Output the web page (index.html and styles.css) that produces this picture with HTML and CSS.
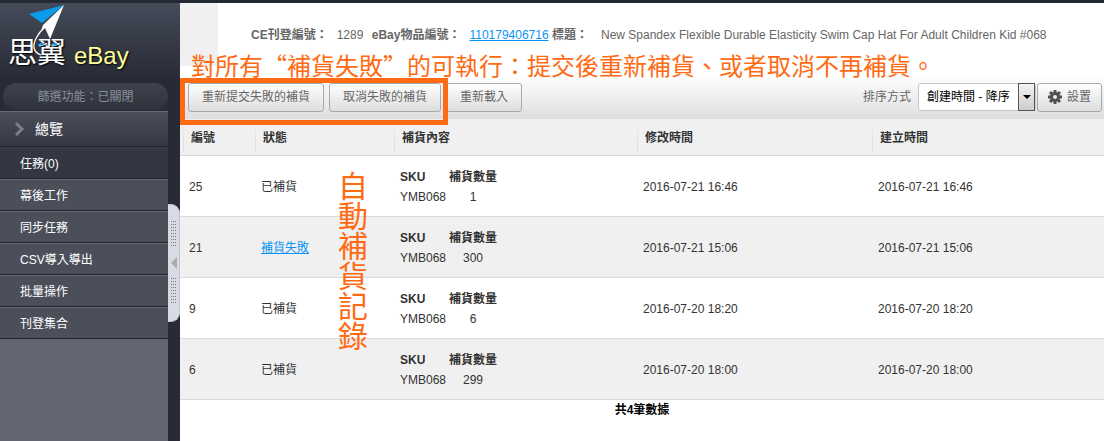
FILE: index.html
```
<!DOCTYPE html>
<html lang="zh-Hant">
<head>
<meta charset="utf-8">
<title>自動補貨記錄</title>
<link rel="stylesheet" href="styles.css">
</head>

<body>
<div class="page">
  <div class="sidebar">
    <div class="logo">
      <span class="brand">思翼</span>
      <span class="product">eBay</span>
      <svg class="plane" width="66" height="60" viewBox="0 0 66 60" aria-hidden="true">
        <path d="M29 10 L64 1 L42 19 Z" fill="#0b9bea"/>
        <path d="M64 1 L50 35 L45 24 L41 27 L43 21 Z" fill="#fff"/>
        <path d="M45 23 C38 29 33 38 34 44 C35 48 38 50 41 51" fill="none" stroke="#fff" stroke-width="1.3"/>
        <path d="M38 41 L41 39 L44 41 Z M51 41 L54 39 L57 41 Z" fill="#0b9bea" stroke="#0b9bea"/>
      </svg>
    </div>
    <button type="button" class="filter">篩選功能：已關閉</button>
    <ul class="menu">
      <li class="menu_title">
        <svg width="10" height="14" viewBox="0 0 10 14" aria-hidden="true"><path d="M1 1 L7 7 L1 13" fill="none" stroke="#7a7e86" stroke-width="3"/></svg>
        <a href="#">總覽</a>
      </li>
      <li class="current"><a href="#">任務(0)</a></li>
      <li><a href="#">幕後工作</a></li>
      <li><a href="#">同步任務</a></li>
      <li><a href="#">CSV導入導出</a></li>
      <li><a href="#">批量操作</a></li>
      <li><a href="#">刊登集合</a></li>
    </ul>
    <button type="button" class="handle" aria-label="收起選單">
      <span class="dots"></span>
      <span class="arrow"></span>
      <span class="dots"></span>
    </button>
  </div>

  <div class="main">
    <div class="info">
      <div class="corner"></div>
      <p class="item">
        <b>CE刊登編號：</b><span class="value">1289</span>
        <b>eBay物品編號：</b><a class="value" href="#">110179406716</a>
        <b>標題：</b><span>New Spandex Flexible Durable Elasticity Swim Cap Hat For Adult Children Kid #068</span>
      </p>
      <p class="note">對所有“補貨失敗”的可執行：提交後重新補貨、或者取消不再補貨。</p>
    </div>

    <div class="toolbar">
      <div class="marked">
        <button type="button" class="btn">重新提交失敗的補貨</button>
        <button type="button" class="btn">取消失敗的補貨</button>
      </div>
      <button type="button" class="btn">重新載入</button>
      <div class="sort">
        <label for="sort">排序方式</label>
        <span class="select">
          <select id="sort">
            <option>創建時間 - 降序</option>
          </select>
        </span>
        <button type="button" class="btn setting">
          <svg width="14" height="14" viewBox="-7 -7 14 14" aria-hidden="true">
            <g stroke="#505050" stroke-width="3">
              <path d="M0 -7 V7 M-7 0 H7 M-5 -5 L5 5 M5 -5 L-5 5"/>
            </g>
            <circle r="5" fill="#505050"/>
            <circle r="2" fill="#ececec"/>
          </svg>
          設置
        </button>
      </div>
    </div>

    <div class="records">
      <table class="list">
        <colgroup>
          <col class="c_id"><col class="c_state"><col class="c_content"><col class="c_time"><col>
        </colgroup>
        <thead>
          <tr><th>編號</th><th>狀態</th><th>補貨內容</th><th>修改時間</th><th>建立時間</th></tr>
        </thead>
        <tbody>
          <tr>
            <td>25</td>
            <td>已補貨</td>
            <td><table class="sku"><tr><th>SKU</th><th>補貨數量</th></tr><tr><td>YMB068</td><td>1</td></tr></table></td>
            <td>2016-07-21 16:46</td>
            <td>2016-07-21 16:46</td>
          </tr>
          <tr>
            <td>21</td>
            <td><a href="#">補貨失敗</a></td>
            <td><table class="sku"><tr><th>SKU</th><th>補貨數量</th></tr><tr><td>YMB068</td><td>300</td></tr></table></td>
            <td>2016-07-21 15:06</td>
            <td>2016-07-21 15:06</td>
          </tr>
          <tr>
            <td>9</td>
            <td>已補貨</td>
            <td><table class="sku"><tr><th>SKU</th><th>補貨數量</th></tr><tr><td>YMB068</td><td>6</td></tr></table></td>
            <td>2016-07-20 18:20</td>
            <td>2016-07-20 18:20</td>
          </tr>
          <tr>
            <td>6</td>
            <td>已補貨</td>
            <td><table class="sku"><tr><th>SKU</th><th>補貨數量</th></tr><tr><td>YMB068</td><td>299</td></tr></table></td>
            <td>2016-07-20 18:00</td>
            <td>2016-07-20 18:00</td>
          </tr>
        </tbody>
      </table>
      <div class="stamp">自動補貨記錄</div>
    </div>
    <div class="total">共4筆數據</div>
  </div>
</div>
</body>
</html>
```

FILE: styles.css
```
*, *::before, *::after {
    box-sizing: border-box;
}
body {
    margin: 0;
    font: 12px/20px "Liberation Sans", "Noto Sans CJK TC", sans-serif;
    color: #333;
    background-color: #fff;
}
button, select {
    font: inherit;
}
a {
    color: #0a94f5;
}
.page {
    display: flex;
    min-height: 100vh;
    border-top: 3px solid #232833;
}

/* sidebar */
.sidebar {
    position: relative;
    display: flex;
    flex-direction: column;
    flex: none;
    width: 180px;
    padding-right: 12px;
    background: linear-gradient(#454b59, #272b35 75px, #272b35);
}
.logo {
    position: relative;
    display: flex;
    align-items: flex-end;
    gap: 8px;
    height: 80px;
    padding: 0 0 15px 8px;
    text-shadow: 1px 1px 2px #000;
}
.plane {
    position: absolute;
    left: 0;
    top: 1px;
}
.brand {
    font-size: 29px;
    line-height: 30px;
    color: #fff;
}
.product {
    font-size: 24px;
    line-height: 24px;
    color: #ffff99;
}
.filter {
    width: 165px;
    height: 27px;
    margin: 0 0 1px 3px;
    border: 0;
    border-radius: 14px;
    background: linear-gradient(#3f434d, #2e323d);
    color: #8b8f98;
}
.menu {
    flex: 1;
    margin: 0;
    padding: 0;
    list-style: none;
    background-color: #626671;
}
.menu li {
    height: 32px;
    padding-left: 20px;
    line-height: 32px;
    border-top: 1px solid #666a75;
    border-bottom: 1px solid #20242e;
    background-color: #4b4f5a;
}
.menu a {
    color: #fff;
    text-decoration: none;
}
.menu .menu_title {
    display: flex;
    align-items: center;
    gap: 10px;
    height: 36px;
    padding-left: 15px;
    font-size: 14px;
    background: linear-gradient(#4a4e59, #333843);
}
.menu .current {
    border-top-color: #3a3e4a;
    background-color: #333743;
}
.handle {
    position: absolute;
    right: 0;
    top: 201px;
    display: flex;
    flex-direction: column;
    align-items: center;
    justify-content: center;
    gap: 9px;
    width: 12px;
    height: 118px;
    padding: 0;
    border: 1px solid #c1c5cd;
    border-left: 0;
    border-radius: 0 9px 9px 0;
    background-color: #d8dbe3;
}
.dots {
    width: 5px;
    height: 27px;
    background:
        repeating-linear-gradient(90deg, transparent 0 1px, #d8dbe3 1px 2px),
        repeating-linear-gradient(#777 0 1px, #d8dbe3 1px 3px);
}
.arrow {
    border: 6px solid transparent;
    border-left: 0;
    border-right-color: #acacac;
}

/* content */
.main {
    flex: 1;
    min-width: 0;
}
.info {
    position: relative;
    height: 72px;
}
.corner {
    position: absolute;
    left: 0;
    top: 0;
    width: 38px;
    height: 63px;
    background-color: #f0f0f0;
}
.item {
    margin: 0;
    padding: 22px 0 0 71px;
    white-space: nowrap;
    color: #666;
}
.item .value {
    margin: 0 5px 0 9px;
}
.item a.value {
    margin-right: 0;
}
.item b:last-of-type {
    margin-right: 13px;
}
.note {
    position: absolute;
    z-index: 1;
    left: 11px;
    top: 46px;
    margin: 0;
    font-family: "Noto Sans CJK JP", sans-serif;
    font-size: 24px;
    line-height: 32px;
    white-space: nowrap;
    color: #ff6a13;
}
.toolbar {
    display: flex;
    align-items: center;
    height: 44px;
    padding-right: 2px;
    background: linear-gradient(#fff, #dedede);
}
.marked {
    position: relative;
    display: flex;
    gap: 5px;
    margin-right: 5px;
    padding-left: 8px;
}
/* frame round the two buttons, reaching into the table head */
.marked::after {
    content: "";
    position: absolute;
    z-index: 1;
    left: 0;
    right: -7px;
    top: -5px;
    height: 47px;
    border: 5px solid #ff6a13;
    pointer-events: none;
}
.btn {
    height: 29px;
    padding: 0 13px;
    border: 1px solid #a5a9b0;
    border-radius: 3px;
    background: linear-gradient(#fff, #ddd);
    color: #666;
    white-space: nowrap;
}
.sort {
    display: flex;
    align-items: center;
    margin-left: auto;
    color: #666;
}
.select {
    position: relative;
    margin: 0 1px 0 7px;
}
.select select {
    width: 118px;
    height: 28px;
    padding: 0 18px 0 8px;
    border: 1px solid #c8c8c8;
    border-radius: 3px;
    appearance: none;
    background-color: #fff;
    color: #000;
}
.select::before {
    content: "";
    position: absolute;
    right: 1px;
    top: 0;
    width: 17px;
    height: 28px;
    border: 1px solid #555;
    background: linear-gradient(#f3f3f3, #ccc);
    pointer-events: none;
}
.select::after {
    content: "";
    position: absolute;
    right: 5px;
    top: 12px;
    border: 4px solid transparent;
    border-top-color: #000;
    border-bottom: 0;
    pointer-events: none;
}
.setting {
    display: flex;
    align-items: center;
    gap: 5px;
    padding: 0 10px;
}

/* records */
.records {
    position: relative;
}
.list {
    width: 100%;
    table-layout: fixed;
    border-collapse: collapse;
}
.c_id {
    width: 72px;
}
.c_state {
    width: 139px;
}
.c_content {
    width: 243px;
}
.c_time {
    width: 235px;
}
.list th, .list td {
    padding: 2px 0 0 9px;
    text-align: left;
}
.list thead th {
    height: 36px;
    padding-left: 11px;
    border-bottom: 1px solid #d9d9d9;
    background: linear-gradient(#f0f0f0, #d8d8d8) 3px 50% / 1px 28px no-repeat #f0f0f0;
}
.list > tbody > tr > td {
    height: 61px;
    border-bottom: 1px solid #d9d9d9;
}
.list > tbody > tr:nth-child(even) {
    background-color: #f0f0f0;
}
.list .sku {
    border-collapse: collapse;
}
.list .sku th, .list .sku td {
    padding: 0;
}
.list .sku th:first-child {
    width: 49px;
}
.list .sku td:last-child {
    text-align: center;
}
.stamp {
    position: absolute;
    left: 158px;
    top: 53px;
    width: 32px;
    font-size: 30px;
    line-height: 30px;
    color: #ff6a13;
}
.total {
    font-weight: bold;
    text-align: center;
    color: #000;
}
```
